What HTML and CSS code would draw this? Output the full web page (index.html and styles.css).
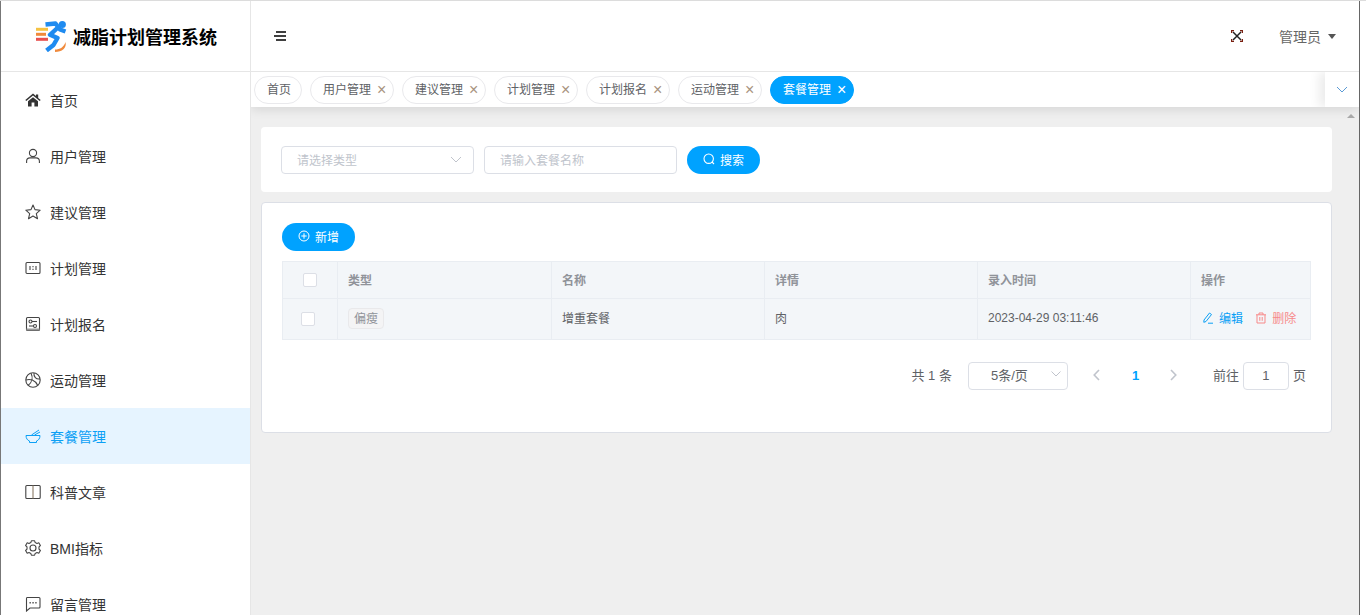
FILE: index.html
```html
<!DOCTYPE html>
<html lang="zh-CN">
<head>
<meta charset="utf-8">
<title>减脂计划管理系统</title>
<link rel="stylesheet" href="styles.css">
</head>
<body>
<div class="frame">
  <aside class="sidebar">
    <div class="brand">
      <svg class="logo" viewBox="35 22 34 32" width="34" height="32">
        <rect x="36" y="29.8" width="12" height="3" fill="#f5c242"/>
        <rect x="36" y="34.8" width="10" height="3" fill="#f08a3c"/>
        <rect x="36" y="39.8" width="12" height="3" fill="#e8504f"/>
        <circle cx="62.3" cy="26.5" r="3.6" fill="#1f8bf0"/>
        <path d="M45.5 26.5 L55.5 25.5 L60 31.5 L65.5 33.5 M59 28.5 L50 36.8 L57.5 40 L53.5 47 L46.5 52.5" fill="none" stroke="#1f8bf0" stroke-width="4.4" stroke-linejoin="round"/>
        <path d="M55 51.5 C60 51.5 64 49 65.5 44 C67 50 62 54 55 54 Z" fill="#f08a3c"/>
      </svg>
      <span class="brand-name">减脂计划管理系统</span>
    </div>
    <nav class="menu">
      <a class="menu-item">
        <svg class="mi" viewBox="0 0 16 16"><path d="M8 1.5 L0.3 8 L1.3 9.1 L8 3.6 L14.7 9.1 L15.7 8 L13.2 5.9 V2.4 H11 V4 Z M3 9.3 V14.4 H6.6 V10.4 H9.4 V14.4 H13 V9.3 L8 5.2 Z" fill="#333"/></svg>
        <span>首页</span>
      </a>
      <a class="menu-item">
        <svg class="mi" viewBox="0 0 16 16" fill="none" stroke="#444" stroke-width="1.1"><circle cx="8" cy="5" r="3.6"/><path d="M1.6 15 V13.2 C1.6 11 3 9.9 5 9.9 H11 C13 9.9 14.4 11 14.4 13.2 V15"/></svg>
        <span>用户管理</span>
      </a>
      <a class="menu-item">
        <svg class="mi" viewBox="0 0 16 16" fill="none" stroke="#444" stroke-width="1.1"><path d="M8 1 L10 5.6 L15.2 6.2 L11.3 9.6 L12.5 14.7 L8 12 L3.5 14.7 L4.7 9.6 L0.8 6.2 L6 5.6 Z" stroke-linejoin="round"/></svg>
        <span>建议管理</span>
      </a>
      <a class="menu-item">
        <svg class="mi" viewBox="0 0 16 16" fill="none" stroke="#444" stroke-width="1.1"><rect x="1" y="2.5" width="14" height="11" rx="1"/><path d="M5 6 V10 M8 6 V7.2 M8 8.8 V10 M11 6 V10"/></svg>
        <span>计划管理</span>
      </a>
      <a class="menu-item">
        <svg class="mi" viewBox="0 0 16 16" fill="none" stroke="#444" stroke-width="1.1"><rect x="1.5" y="1.5" width="13" height="13" rx="1"/><circle cx="5.5" cy="5.5" r="1.5"/><path d="M7 5.5 H12"/><circle cx="10" cy="10" r="1.5"/><path d="M4 10 H8.5"/><path d="M1.5 13.5 H14.5" stroke-width="2" stroke="#999"/></svg>
        <span>计划报名</span>
      </a>
      <a class="menu-item">
        <svg class="mi" viewBox="0 0 16 16" fill="none" stroke="#444" stroke-width="1.1"><circle cx="8" cy="8" r="7.2"/><path d="M6 1.2 C8 5 7.5 10 3 13.5 M1 8 C5 6.5 10 8 12.8 13.4 M9 1 C8.5 5 11 7.5 15 7"/></svg>
        <span>运动管理</span>
      </a>
      <a class="menu-item active">
        <svg class="mi" viewBox="0 0 16 16" fill="none" stroke="#0ba0f5" stroke-width="1"><path d="M1 7.5 H15 C15 10.5 13.5 12.3 11.5 13 V14.5 H4.5 V13 C2.5 12.3 1 10.5 1 7.5 Z"/><path d="M6.5 7 L14 2 M9.5 7 L15 4"/></svg>
        <span>套餐管理</span>
      </a>
      <a class="menu-item">
        <svg class="mi" viewBox="0 0 16 16" fill="none" stroke="#444" stroke-width="1.1"><rect x="0.8" y="1.5" width="14.4" height="13" rx="1"/><path d="M8 1.5 V14.5" stroke="#8a7a66"/></svg>
        <span>科普文章</span>
      </a>
      <a class="menu-item">
        <svg class="mi" viewBox="0 0 16 16" fill="none" stroke="#444" stroke-width="1.1"><path d="M6.4 0.8 H9.6 L10.2 2.6 L12 3.4 L13.8 2.8 L15.4 5.5 L14 6.8 V9.2 L15.4 10.5 L13.8 13.2 L12 12.6 L10.2 13.4 L9.6 15.2 H6.4 L5.8 13.4 L4 12.6 L2.2 13.2 L0.6 10.5 L2 9.2 V6.8 L0.6 5.5 L2.2 2.8 L4 3.4 L5.8 2.6 Z" stroke-linejoin="round"/><circle cx="8" cy="8" r="3"/></svg>
        <span>BMI指标</span>
      </a>
      <a class="menu-item">
        <svg class="mi" viewBox="0 0 16 16" fill="none" stroke="#444" stroke-width="1.1"><path d="M2 1.5 H14 C14.6 1.5 15 2 15 2.5 V11 C15 11.6 14.6 12 14 12 H5 L1.5 15 V2.5 C1.5 2 1.6 1.5 2 1.5 Z"/><path d="M4.5 6.8 H5.8 M7.4 6.8 H8.7 M10.3 6.8 H11.6" stroke-width="1.4"/></svg>
        <span>留言管理</span>
      </a>
    </nav>
  </aside>

  <div class="content">
    <header class="topbar">
      <svg class="burger" viewBox="0 0 12 10" width="12" height="10"><path d="M2 1 H12 M0 5 H12 M2 9 H12" stroke="#000" stroke-width="1.6"/></svg>
      <div class="top-right">
        <svg class="fullscreen" viewBox="0 0 12 12" width="12" height="12" fill="none" stroke="#222" stroke-width="1.5"><path d="M2 2 L10 10 M10 2 L2 10"/><path d="M0.6 3 V0.6 H3 M9 0.6 H11.4 V3 M0.6 9 V11.4 H3 M9 11.4 H11.4 V9" stroke="#7a1f10" stroke-width="1.2"/></svg>
        <span class="user">管理员</span>
        <span class="caret"></span>
      </div>
    </header>

    <div class="tabs">
      <div class="tab-list">
        <span class="tab tab-home">首页</span>
        <span class="tab tab-close">用户管理<i class="x">×</i></span>
        <span class="tab tab-close">建议管理<i class="x">×</i></span>
        <span class="tab tab-close">计划管理<i class="x">×</i></span>
        <span class="tab tab-close">计划报名<i class="x">×</i></span>
        <span class="tab tab-close">运动管理<i class="x">×</i></span>
        <span class="tab tab-close tab-on">套餐管理<i class="x">×</i></span>
      </div>
      <div class="tab-more">
        <svg viewBox="0 0 12 7" width="12" height="7" fill="none" stroke="#5b9bd5" stroke-width="1"><path d="M1 1 L6 6 L11 1"/></svg>
      </div>
    </div>

    <div class="body-row">
      <main class="main">
        <section class="search-card">
          <div class="field field-select">
            <span class="ph">请选择类型</span>
            <svg viewBox="0 0 12 7" width="12" height="7" fill="none" stroke="#c0c4cc" stroke-width="1"><path d="M1 1 L6 6 L11 1"/></svg>
          </div>
          <div class="field"><span class="ph">请输入套餐名称</span></div>
          <button class="btn btn-search">
            <svg viewBox="0 0 12 12" width="12" height="12" fill="none" stroke="#fff" stroke-width="1.1"><circle cx="5.7" cy="5.7" r="4.7"/><path d="M9 9 L11 11"/></svg>
            <span>搜索</span>
          </button>
        </section>

        <section class="table-card">
          <button class="btn btn-add">
            <svg viewBox="0 0 12 12" width="12" height="12" fill="none" stroke="#fff" stroke-width="1"><circle cx="6" cy="6" r="5"/><path d="M6 3.3 V8.7 M3.3 6 H8.7"/></svg>
            <span>新增</span>
          </button>

          <table class="grid">
            <colgroup>
              <col class="c-check"><col class="c-first"><col class="c-w"><col class="c-w"><col class="c-w"><col class="c-op">
            </colgroup>
            <thead>
              <tr>
                <th class="cell-check head-check"><span class="check"></span></th>
                <th>类型</th><th>名称</th><th>详情</th><th>录入时间</th><th>操作</th>
              </tr>
            </thead>
            <tbody>
              <tr>
                <td class="cell-check row-check"><span class="check"></span></td>
                <td><span class="tag">偏瘦</span></td>
                <td class="cjk">增重套餐</td>
                <td class="cjk">肉</td>
                <td>2023-04-29 03:11:46</td>
                <td class="ops">
                  <span class="op op-edit">
                    <svg viewBox="0 0 12 12" width="12" height="12" fill="none" stroke="#0ba0f5" stroke-width="1"><path d="M7.5 1 L9.5 2.5 L4 9.5 L1.8 10.3 L2 8 Z M6 11.2 H11"/></svg>
                    编辑
                  </span>
                  <span class="op op-del">
                    <svg viewBox="0 0 12 12" width="12" height="12" fill="none" stroke="#f78989" stroke-width="1"><path d="M1 2.8 H11 M4 2.8 V1 H8 V2.8 M2 2.8 V11 H10 V2.8 M4.8 5 V8.8 M7.2 5 V8.8"/></svg>
                    删除
                  </span>
                </td>
              </tr>
            </tbody>
          </table>

          <div class="pager">
            <span class="total">共 1 条</span>
            <div class="size-select">
              <span>5条/页</span>
              <svg viewBox="0 0 10 6" width="10" height="6" fill="none" stroke="#c0c4cc" stroke-width="1"><path d="M0.5 0.5 L5 5 L9.5 0.5"/></svg>
            </div>
            <svg class="arrow arrow-prev" viewBox="0 0 7 12" width="7" height="12" fill="none" stroke="#c0c4cc" stroke-width="1.6"><path d="M6 1 L1.2 6 L6 11"/></svg>
            <span class="page-now">1</span>
            <svg class="arrow arrow-next" viewBox="0 0 7 12" width="7" height="12" fill="none" stroke="#c0c4cc" stroke-width="1.6"><path d="M1 1 L5.8 6 L1 11"/></svg>
            <span class="goto">前往</span>
            <span class="page-input">1</span>
            <span class="goto-end">页</span>
          </div>
        </section>
      </main>
      <div class="scrollbar"><span class="scroll-up"></span></div>
    </div>
  </div>
</div>
</body>
</html>
```

FILE: styles.css
```css
* { box-sizing: border-box; }

html, body {
  margin: 0;
  height: 100%;
  overflow: hidden;
  background: #fff;
}

body {
  font-family: "Liberation Sans", "Noto Sans CJK SC", sans-serif;
  font-size: 12px;
  color: #606266;
  display: flex;
  border-top: 1px solid #dcdcdc;
}

.frame {
  display: flex;
  flex: 0 0 1360px;
  height: 614px;
  border-left: 1px solid #777;
  border-right: 1px solid #666;
  overflow: hidden;
}

/* sidebar */
.sidebar {
  flex: 0 0 250px;
  border-right: 1px solid #e6e6e6;
  background: #fff;
}

.brand {
  height: 71px;
  display: flex;
  align-items: center;
  gap: 4px;
  padding-left: 34px;
  border-bottom: 1px solid #e6e6e6;
}

.brand-name {
  font-size: 18px;
  font-weight: 700;
  color: #000;
}

.menu { display: flex; flex-direction: column; }

.menu-item {
  flex: 0 0 56px;
  display: flex;
  align-items: center;
  gap: 9px;
  padding-left: 24px;
  font-size: 14px;
  color: #333;
}

.menu-item.active {
  background: #e6f4ff;
  color: #0ba0f5;
}

.mi { width: 16px; height: 16px; flex: none; }

/* right column */
.content {
  flex: 1;
  min-width: 0;
  display: flex;
  flex-direction: column;
  background: #efefef;
}

.topbar {
  flex: 0 0 71px;
  display: flex;
  align-items: center;
  justify-content: space-between;
  padding: 0 23px 0 23px;
  background: #fff;
  border-bottom: 1px solid #e6e6e6;
}

.top-right { display: flex; align-items: center; }

.user {
  margin-left: 36px;
  font-size: 14px;
  color: #666;
}

.caret {
  margin-left: 7px;
  border-left: 4.5px solid transparent;
  border-right: 4.5px solid transparent;
  border-top: 5px solid #555;
}

.tabs {
  flex: 0 0 35px;
  display: flex;
  background: #fff;
  box-shadow: 0 2px 12px rgba(0, 0, 0, .12);
  clip-path: inset(0 0 -24px 0);
  position: relative;
}

.tab-list {
  flex: 1;
  display: flex;
  align-items: center;
  gap: 8px;
  padding-left: 3px;
}

.tab {
  height: 28px;
  display: inline-flex;
  align-items: center;
  padding: 0 12px;
  border: 1px solid #e9e9ec;
  border-radius: 14px;
  color: #606266;
  line-height: 1;
}

.tab-home { padding-right: 10px; }
.tab-close { padding-right: 7px; }

.tab-on {
  background: #00a2ff;
  border-color: #00a2ff;
  color: #fff;
}

.x {
  margin-left: 6px;
  width: 9px;
  font-style: normal;
  font-size: 16px;
  line-height: 12px;
  text-align: center;
  color: #a8937e;
}

.tab-on .x { color: #fff; }

.tab-more {
  flex: 0 0 34px;
  display: flex;
  align-items: center;
  justify-content: center;
  background: #fff;
  box-shadow: -6px 0 10px rgba(0, 0, 0, .08);
  clip-path: inset(0 0 0 -24px);
}

.body-row {
  flex: 1;
  min-height: 0;
  display: flex;
}

.main {
  flex: 1;
  min-width: 0;
  padding: 20px 11px 0 10px;
}

.scrollbar {
  flex: 0 0 16px;
  display: flex;
  justify-content: center;
  padding-top: 7px;
}

.scroll-up {
  width: 0;
  height: 0;
  border-left: 4px solid transparent;
  border-right: 4px solid transparent;
  border-bottom: 4px solid #aaa;
}

/* search */
.search-card {
  height: 65px;
  display: flex;
  align-items: flex-start;
  gap: 10px;
  padding: 19px 20px;
  background: #fff;
  border-radius: 4px;
}

.field {
  width: 193px;
  height: 28px;
  display: flex;
  align-items: center;
  justify-content: space-between;
  padding: 0 11px 2px 15px;
  border: 1px solid #dcdfe6;
  border-radius: 4px;
  background: #fff;
}

.ph { color: #c0c4cc; }

.btn {
  height: 28px;
  width: 73px;
  display: flex;
  align-items: center;
  justify-content: center;
  gap: 5px;
  border: 0;
  padding: 0 0 2px;
  border-radius: 14px;
  background: #00a2ff;
  color: #fff;
  font: inherit;
}

/* table card */
.table-card {
  height: 231px;
  margin-top: 10px;
  padding: 20px;
  background: #fff;
  border: 1px solid #dcdfe6;
  border-radius: 4px;
}

.grid {
  width: 1028px;
  margin-top: 10px;
  table-layout: fixed;
  border-collapse: collapse;
  background: #f3f6f9;
}

.c-check { width: 55px; }
.c-first { width: 214px; }
.c-w { width: 213px; }
.c-op { width: 120px; }

.grid th, .grid td {
  border: 1px solid #e9edf2;
  padding: 0 10px;
  text-align: left;
}

.grid th {
  height: 37px;
  padding-bottom: 2px;
  font-weight: 700;
  color: #909399;
}

.grid td {
  height: 41px;
  padding-bottom: 2px;
  color: #606266;
}

.grid .cjk { padding-bottom: 4px; }
.grid .cell-check { padding: 0; }
.grid .head-check { padding-left: 20px; }
.grid .row-check { padding-left: 18px; }

.check {
  display: block;
  width: 14px;
  height: 14px;
  background: #fff;
  border: 1px solid #dcdfe6;
  border-radius: 2px;
}

.tag {
  display: inline-block;
  height: 21px;
  line-height: 20px;
  padding: 0 5px;
  background: #f4f4f5;
  border: 1px solid #e9e9eb;
  border-radius: 4px;
  color: #909399;
}

.grid .ops { white-space: nowrap; padding-left: 11px; padding-right: 0; }

.op {
  display: inline-flex;
  align-items: center;
  gap: 5px;
}

.op-edit { color: #0ba0f5; }
.op-del { color: #f78989; margin-left: 9px; }

/* pagination */
.pager {
  display: flex;
  align-items: center;
  height: 28px;
  margin-top: 22px;
  padding-right: 5px;
  justify-content: flex-end;
  font-size: 13px;
  color: #606266;
}

.total, .goto, .goto-end { padding-bottom: 4px; }
.page-now, .arrow { margin-bottom: 2px; }

.size-select {
  width: 100px;
  height: 28px;
  margin-left: 16px;
  display: flex;
  align-items: center;
  justify-content: space-between;
  padding: 0 6px 4px 22px;
  border: 1px solid #dcdfe6;
  border-radius: 4px;
}

.arrow-prev { margin-left: 25px; }

.page-now {
  margin-left: 32px;
  width: 7px;
  font-weight: 700;
  color: #00a2ff;
}

.arrow-next { margin-left: 31px; }

.goto { margin-left: 36px; }

.page-input {
  width: 46px;
  height: 28px;
  margin: 0 4px;
  padding-bottom: 2px;
  display: flex;
  align-items: center;
  justify-content: center;
  border: 1px solid #dcdfe6;
  border-radius: 4px;
}
```
